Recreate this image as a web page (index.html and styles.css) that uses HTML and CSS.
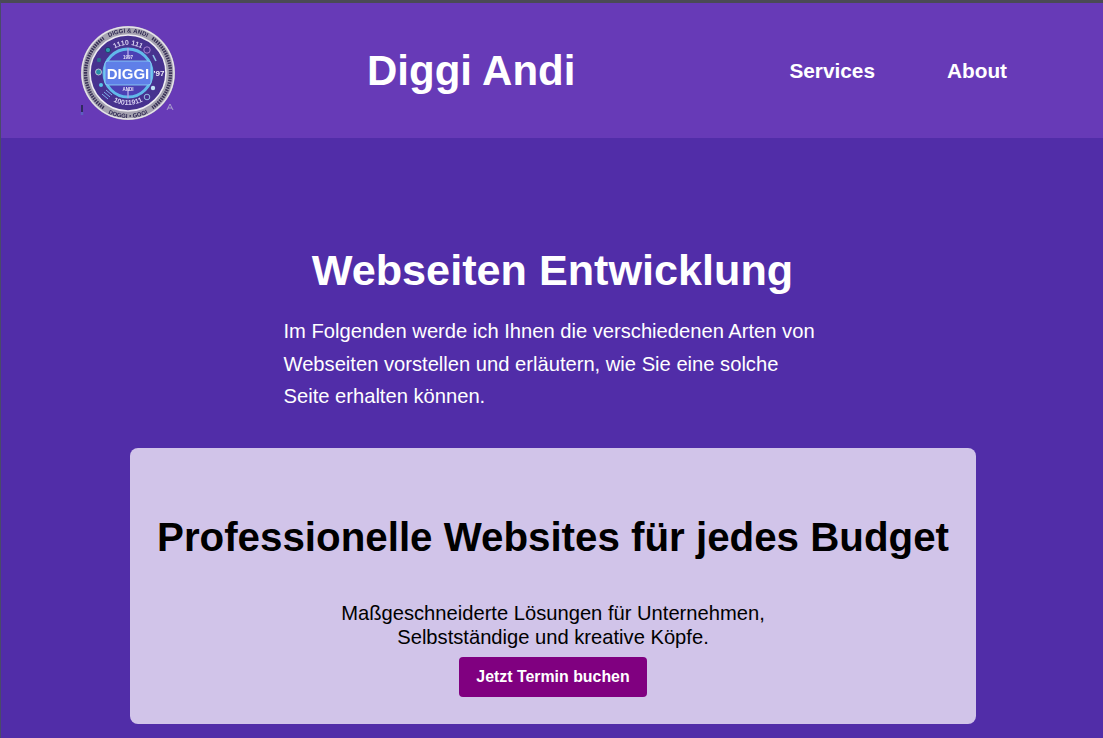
FILE: index.html
```html
<!DOCTYPE html>
<html lang="de">
<head>
    <meta charset="UTF-8">
    <meta name="viewport" content="width=device-width, initial-scale=1.0">
    <title>Diggi Andi</title>
    <link rel="stylesheet" href="styles.css">
</head>
<body>
    <header class="site-header">
        <div class="logo">
            <svg viewBox="0 0 130 120" width="130" height="120" role="img" aria-label="Diggi Andi Logo">
                <defs>
                    <path id="ringTop" d="M44.8 28.8 A40.5 40.5 0 0 1 91.2 28.8"></path>
                    <path id="ringBottom" d="M45.5 101 A45 45 0 0 0 90.5 101"></path>
                    <path id="innerTop" d="M51 40 A27 27 0 0 1 85 40"></path>
                    <path id="innerBottom" d="M52 89.7 A32 32 0 0 0 84 89.7"></path>
                    <filter id="soft"><feGaussianBlur stdDeviation="0.3"></feGaussianBlur></filter>
                </defs>
                <g filter="url(#soft)">
                    <circle cx="68" cy="62" r="47" fill="#a5a2b0"></circle>
                    <circle cx="68" cy="62" r="46" fill="none" stroke="#e6e4ea" stroke-width="1.4"></circle>
                    <path class="ring-dash" d="M43.6 96.8 A42.5 42.5 0 0 1 43.6 27.2"></path>
                    <path class="ring-dash" d="M92.4 27.2 A42.5 42.5 0 0 1 92.4 96.8"></path>
                    <circle cx="68" cy="62" r="38" fill="#47308f" stroke="#eeecf2" stroke-width="1.6"></circle>
                    <text class="ring-text" text-anchor="middle"><textPath href="#ringTop" startOffset="50%">DIGGI &amp; ANDI</textPath></text>
                    <text class="ring-text" text-anchor="middle"><textPath href="#ringBottom" startOffset="50%">DOGGI &#8226; GOGI</textPath></text>
                    <text class="inner-text" text-anchor="middle"><textPath href="#innerTop" startOffset="50%">1110 111</textPath></text>
                    <text class="inner-text" text-anchor="middle"><textPath href="#innerBottom" startOffset="50%">10011911</textPath></text>
                    <circle cx="68" cy="62" r="24" fill="#4b3fb4" stroke="#62b9ea" stroke-width="3"></circle>
                    <path d="M68 37v8M68 79v8" stroke="#a9a0e8" stroke-width="1.5"></path>
                    <rect x="45" y="50" width="46" height="24" rx="3" fill="#5f7fe8" stroke="#8fd8f5" stroke-width="0.8"></rect>
                    <text class="logo-name" x="68" y="68" text-anchor="middle">DIGGI</text>
                    <text class="logo-small" x="68" y="48" text-anchor="middle">1997</text>
                    <text class="logo-small" x="68" y="80" text-anchor="middle">ANDI</text>
                    <text class="logo-year" x="99" y="65" text-anchor="middle">'97</text>
                    <circle cx="38.5" cy="61" r="3" fill="#2c8fa8" stroke="#d8d8e0" stroke-width="0.8"></circle>
                    <circle cx="39" cy="49" r="2.2" fill="#2c6f90"></circle>
                    <circle cx="48" cy="39" r="2.6" fill="#2f9bb0" stroke="#13294f" stroke-width="0.6"></circle>
                    <circle cx="87" cy="39" r="3.2" fill="none" stroke="#b08ad8" stroke-width="0.9"></circle>
                    <path d="M93 44l3 6" stroke="#8fc4e8" stroke-width="1.6"></path>
                    <circle cx="41" cy="74" r="2" fill="#54c4e8"></circle>
                    <path d="M42 83l6 5M44 81l6 5M46 79l6 5" stroke="#7fb4ee" stroke-width="1"></path>
                    <circle cx="87" cy="86" r="2.8" fill="none" stroke="#9fd0ee" stroke-width="0.9"></circle>
                    <circle cx="93" cy="77" r="2.2" fill="#c0e4f4"></circle>
                    <path d="M22 101v-7" stroke="#2b2b55" stroke-width="1.8"></path>
                    <path d="M22 101v3" stroke="#5b5fc0" stroke-width="2.4"></path>
                    <path d="M107 99l3-6 3 6m-5-2h4" fill="none" stroke="#b9b6d0" stroke-width="0.8"></path>
                </g>
            </svg>
        </div>
        <div class="site-title">Diggi Andi</div>
        <nav class="site-nav">
            <a href="#">Services</a>
            <a href="#">About</a>
        </nav>
    </header>

    <main>
        <section class="intro">
            <h1>Webseiten Entwicklung</h1>
            <p>Im Folgenden werde ich Ihnen die verschiedenen Arten von Webseiten vorstellen und erläutern, wie Sie eine solche Seite erhalten können.</p>
        </section>

        <section class="card">
            <h2>Professionelle Websites für jedes Budget</h2>
            <p>Maßgeschneiderte Lösungen für Unternehmen,<br>Selbstständige und kreative Köpfe.</p>
            <a class="cta" href="#">Jetzt Termin buchen</a>
        </section>
    </main>
</body>
</html>
```

FILE: styles.css
```css
* {
    margin: 0;
    padding: 0;
    box-sizing: border-box;
}

html, body {
    height: 100%;
    overflow: hidden;
}

body {
    font-family: "Liberation Sans", Arial, sans-serif;
    background-color: #512da8;
    color: #fff;
    border-top: 3px solid #4a4a55;
    border-left: 1px solid #4a4a6a;
}

.site-header {
    display: flex;
    align-items: center;
    height: 135px;
    background-color: #673ab7;
    padding-left: 59px;
}

.logo {
    width: 130px;
    height: 120px;
    flex-shrink: 0;
}

.site-title {
    margin-left: 177px;
    font-size: 42px;
    font-weight: bold;
}

.site-nav {
    display: flex;
    gap: 72px;
    margin-left: 214px;
}

.site-nav a {
    color: #fff;
    text-decoration: none;
    font-size: 20.8px;
    font-weight: bold;
}

.ring-dash {
    fill: none;
    stroke: #3a3358;
    stroke-width: 3.4;
    stroke-dasharray: 1.6 0.9;
}

.ring-text {
    font-size: 6px;
    font-weight: bold;
    fill: #2d2652;
}

.inner-text {
    font-size: 7px;
    font-weight: bold;
    fill: #d9d4f2;
}

.logo-name {
    font-size: 15px;
    font-weight: bold;
    fill: #fff;
}

.logo-small {
    font-size: 4.5px;
    font-weight: bold;
    fill: #e6e4f5;
}

.logo-year {
    font-size: 8px;
    font-weight: bold;
    fill: #f0eef8;
}

main {
    display: flex;
    flex-direction: column;
    align-items: center;
    padding-top: 102px;
    padding-left: 1px;
}

.intro {
    display: flex;
    flex-direction: column;
    align-items: center;
}

.intro h1 {
    font-size: 43.2px;
    line-height: 60px;
    margin-bottom: 15px;
}

.intro p {
    width: 538px;
    font-size: 20.16px;
    line-height: 32.5px;
}

.card {
    width: 846px;
    height: 276px;
    margin-top: 35px;
    padding-top: 65px;
    padding-left: 1px;
    background-color: #d1c4e9;
    border-radius: 8px;
    color: #000;
    text-align: center;
}

.card h2 {
    font-size: 40.3px;
    line-height: 50px;
    margin-bottom: 38px;
}

.card p {
    font-size: 20.16px;
    line-height: 24px;
    margin-bottom: 8px;
}

.cta {
    display: inline-block;
    width: 188px;
    height: 40px;
    line-height: 39px;
    background-color: #800080;
    color: #fff;
    font-size: 15.9px;
    font-weight: bold;
    text-decoration: none;
    border-radius: 4px;
}
```
